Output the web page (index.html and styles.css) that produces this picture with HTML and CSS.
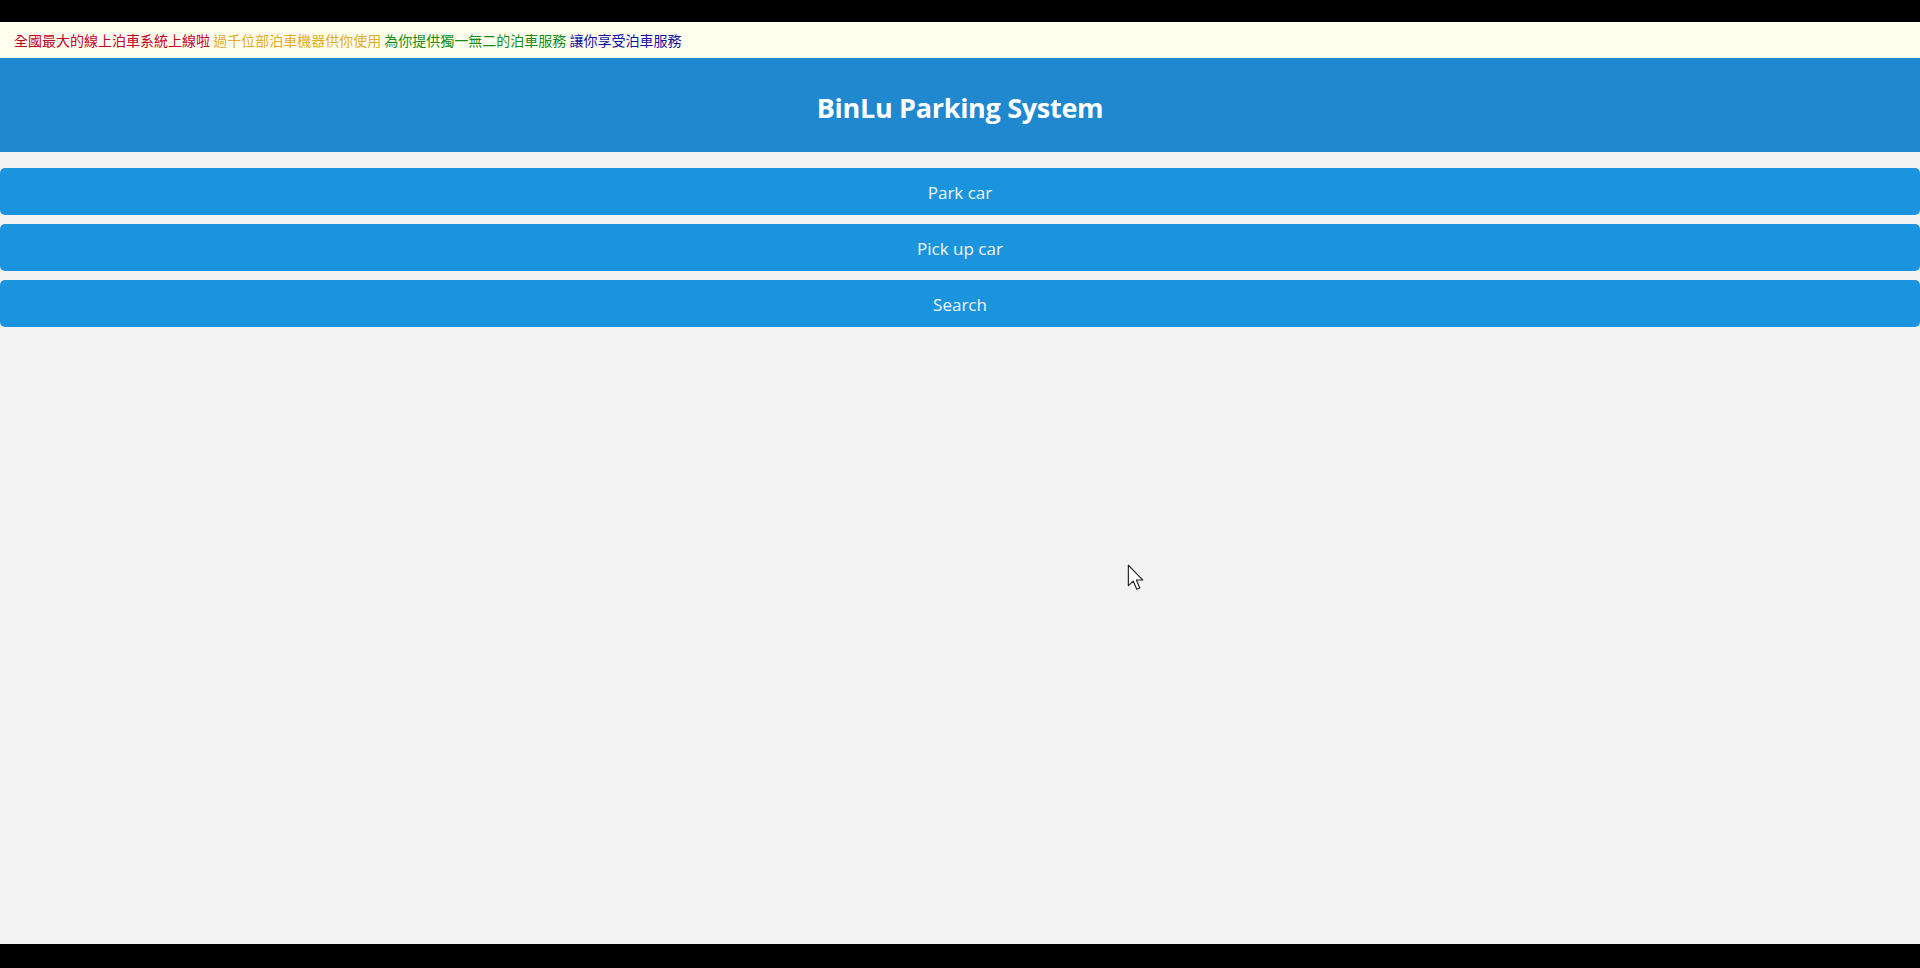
FILE: index.html
```html
<!DOCTYPE html>
<html lang="zh-Hant">
<head>
<meta charset="utf-8">
<title>BinLu Parking System</title>
<link rel="stylesheet" href="styles.css">
</head>
<body>
<div class="frame">
  <div class="marquee">
    <span class="m-red">全國最大的線上泊車系統上線啦</span>
    <span class="m-gold">過千位部泊車機器供你使用</span>
    <span class="m-green">為你提供獨一無二的泊車服務</span>
    <span class="m-blue">讓你享受泊車服務</span>
  </div>
  <header class="header">
    <h1 class="title">BinLu Parking System</h1>
  </header>
  <main class="actions">
    <button class="btn">Park car</button>
    <button class="btn">Pick up car</button>
    <button class="btn">Search</button>
  </main>
  <svg class="cursor" width="18" height="28" viewBox="0 0 14 22">
    <path d="M1 1 L1 17 L4.8 13.4 L7.6 19.8 L10 18.8 L7.3 12.6 L12.4 12.6 Z" fill="#fff" stroke="#222" stroke-width="0.9" stroke-linejoin="round"/>
  </svg>
</div>
</body>
</html>
```
FILE: styles.css
```css
html, body {
  margin: 0;
  padding: 0;
  background: #000;
}
.frame {
  position: relative;
  margin-top: 22px;
  height: 922px;
  background: #f3f3f3;
  font-family: "Open Sans", "Noto Sans", sans-serif;
  overflow: hidden;
}
.marquee {
  height: 36px;
  line-height: 36px;
  padding-left: 14px;
  background: #fffff0;
  font-family: "Noto Sans CJK TC", sans-serif;
  font-size: 14px;
  white-space: nowrap;
}
.m-red { color: #c4002a; }
.m-gold { color: #e2ad22; }
.m-green { color: #168c16; }
.m-blue { color: #1212a2; }
.header {
  height: 94px;
  background: #1f88ce;
  display: flex;
  align-items: center;
  justify-content: center;
}
.title {
  margin: 0;
  padding-top: 5px;
  color: #fff;
  font-size: 27px;
  font-weight: 700;
  letter-spacing: -0.3px;
}
.actions {
  display: flex;
  flex-direction: column;
  gap: 9px;
  padding-top: 16px;
}
.btn {
  height: 47px;
  border: none;
  border-radius: 5px;
  background: #1a95dd;
  color: #f2f6fa;
  font-family: "Open Sans", "Noto Sans", sans-serif;
  font-size: 17px;
  padding: 2px 0 0;
  width: 100%;
}
.cursor {
  position: absolute;
  left: 1127px;
  top: 542px;
}
```
